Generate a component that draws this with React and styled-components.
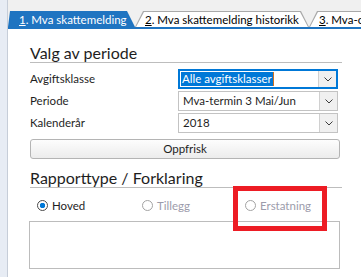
import styled, { createGlobalStyle } from "styled-components";

const GlobalStyle = createGlobalStyle`
  body {
    margin: 0;
    background: #f0f0f0;
    font-family: Lato, "Noto Sans", sans-serif;
  }
`;

const BLUE = "#1f74c1";

export default function App() {
  return (
    <>
      <GlobalStyle />
      <Page>
        <SideStrip />
        <Main>
          <TabBar>
            <Tab $active $first>
              <TabFace $active $first>
                <u>1</u>. Mva skattemelding
              </TabFace>
            </Tab>
            <Tab $width="174px">
              <TabFace>
                <u>2</u>. Mva skattemelding historikk
              </TabFace>
            </Tab>
            <Tab $width="80px">
              <TabFace>
                <u>3</u>. Mva-oppgjør
              </TabFace>
            </Tab>
          </TabBar>

          <Content>
            <SectionTitle>Valg av periode</SectionTitle>
            <Form>
              <Label>Avgiftsklasse</Label>
              <Select value="Alle avgiftsklasser" focused />
              <Label>Periode</Label>
              <Select value="Mva-termin 3 Mai/Jun" />
              <Label>Kalenderår</Label>
              <Select value="2018" />
            </Form>
            <Button>Oppfrisk</Button>

            <SectionTitle $gap="9px">Rapporttype / Forklaring</SectionTitle>
            <RadioRow>
              <Radio checked label="Hoved" />
              <Radio disabled label="Tillegg" />
              <Radio disabled label="Erstatning" />
            </RadioRow>
            <TextBox />
          </Content>
        </Main>
        <Highlight />
      </Page>
    </>
  );
}

function Select({ value, focused }) {
  return (
    <SelectBox $focused={focused}>
      <Value $selected={focused}>{value}</Value>
      {focused && <Caret />}
      <DropButton>
        <svg width="8" height="5" viewBox="0 0 8 5">
          <polyline points="0.5,0.5 4,4 7.5,0.5" fill="none" stroke="#3c3c3c" strokeWidth="1" />
        </svg>
      </DropButton>
    </SelectBox>
  );
}

function Radio({ checked, disabled, label }) {
  return (
    <RadioItem $disabled={disabled}>
      <RadioCircle $checked={checked} $disabled={disabled} />
      {label}
    </RadioItem>
  );
}

const Page = styled.div`
  position: relative;
  display: flex;
  width: 361px;
  height: 277px;
  overflow: hidden;
`;

const SideStrip = styled.div`
  width: 7px;
  flex-shrink: 0;
  background: #e7ecf4;
  border-right: 1px solid #c6cdd8;
`;

const Main = styled.div`
  flex: 1;
  display: flex;
  flex-direction: column;
  background: #fff;
  min-width: 0;
`;

const TabBar = styled.div`
  height: 27px;
  display: flex;
  align-items: flex-end;
  background: #f0f0f0;
  border-bottom: 2px solid ${BLUE};
  white-space: nowrap;
  overflow: hidden;
`;

const Tab = styled.div`
  flex-shrink: 0;
  width: ${(p) => p.$width || "127px"};
  height: 16px;
  padding: 1px 1px 0;
  box-sizing: border-box;
  background: ${(p) => (p.$active ? BLUE : "#a9a9a9")};
  clip-path: polygon(
    0 100%,
    ${(p) => (p.$first ? "2px" : "8px")} 0,
    calc(100% - 8px) 0,
    100% 100%
  );
`;

const TabFace = styled.div`
  height: 100%;
  padding-left: ${(p) => (p.$first ? "10px" : "9px")};
  background: ${(p) => (p.$active ? BLUE : "#fff")};
  color: ${(p) => (p.$active ? "#fff" : "#000")};
  font-size: 11.5px;
  line-height: 15px;
  clip-path: polygon(
    0 100%,
    ${(p) => (p.$first ? "2px" : "8px")} 0,
    calc(100% - 8px) 0,
    100% 100%
  );
`;

const Content = styled.div`
  display: flex;
  flex-direction: column;
  padding: 0 21px 0 22px;
`;

const SectionTitle = styled.h2`
  margin: ${(p) => p.$gap || "14px"} -2px 0 0;
  font-size: 16px;
  line-height: 19px;
  font-weight: normal;
  color: #1e1e1e;
  border-bottom: 1px solid #bdbdbd;
`;

const Form = styled.div`
  display: grid;
  grid-template-columns: 148px 160px;
  grid-auto-rows: 20px;
  row-gap: 2px;
  margin-top: 6px;
`;

const Label = styled.div`
  font-size: 11.5px;
  line-height: 20px;
  color: #1e1e1e;
`;

const SelectBox = styled.div`
  display: flex;
  align-items: center;
  box-sizing: border-box;
  height: 20px;
  padding-left: ${(p) => (p.$focused ? "1px" : "3px")};
  border: ${(p) => (p.$focused ? "2px solid #0078d7" : "1px solid #c3c3c3")};
  background: #fff;
  font-size: 11.5px;
  color: #1e1e1e;
`;

const Value = styled.span`
  padding: 0 1px;
  line-height: 14px;
  background: ${(p) => (p.$selected ? "#0078d7" : "transparent")};
  color: ${(p) => (p.$selected ? "#fff" : "#1e1e1e")};
`;

const Caret = styled.span`
  width: 1px;
  height: 14px;
  background: #d07020;
`;

const DropButton = styled.div`
  margin-left: auto;
  width: 17px;
  height: 100%;
  display: flex;
  align-items: center;
  justify-content: center;
  background: #f0f0f0;
  border-left: 1px solid #d0d0d0;
`;

const Button = styled.div`
  margin-top: 6px;
  height: 20px;
  box-sizing: border-box;
  border: 1px solid #b4b4b4;
  border-radius: 3px;
  background: linear-gradient(#fdfdfd, #ececec);
  font-size: 11.5px;
  line-height: 18px;
  text-align: center;
  color: #1e1e1e;
`;

const RadioRow = styled.div`
  display: grid;
  grid-template-columns: 105px 103px auto;
  margin-top: 9px;
  padding-left: 7px;
  height: 16px;
`;

const RadioItem = styled.div`
  display: flex;
  align-items: center;
  gap: 4px;
  font-size: 11.5px;
  color: ${(p) => (p.$disabled ? "#9c9cab" : "#1e1e1e")};
`;

const RadioCircle = styled.span`
  width: 11px;
  height: 11px;
  box-sizing: border-box;
  border-radius: 50%;
  border: 1px solid ${(p) => (p.$disabled ? "#a3a3a3" : "#4a4a4a")};
  background: ${(p) =>
    p.$checked ? "radial-gradient(circle, #0078d7 0 2.5px, #fff 3px)" : "#fff"};
`;

const TextBox = styled.div`
  margin: 8px 0 0 -1px;
  height: 48px;
  box-sizing: border-box;
  border: 1px solid #bcbcbc;
`;

const Highlight = styled.div`
  position: absolute;
  left: 233px;
  top: 186px;
  width: 94px;
  height: 45px;
  box-sizing: border-box;
  border: 5px solid #ed1c24;
`;
